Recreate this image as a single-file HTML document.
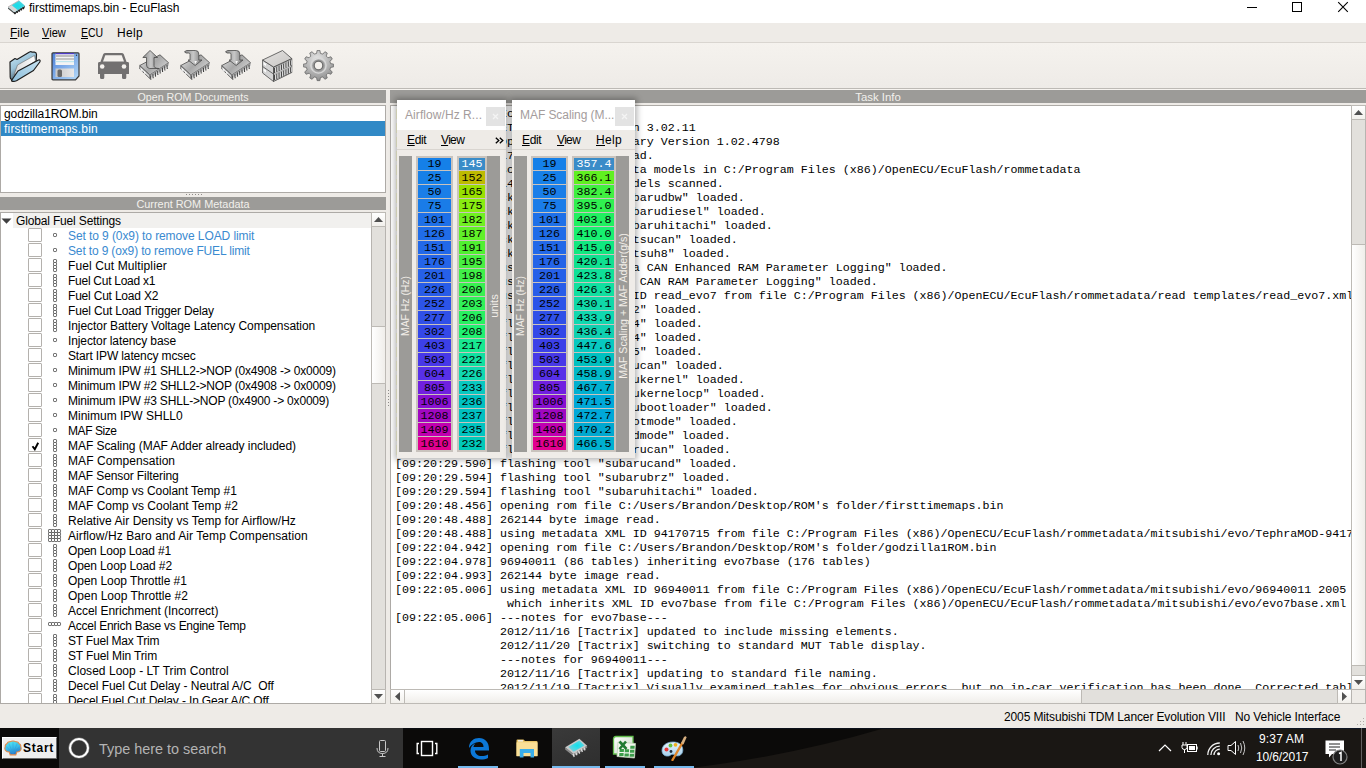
<!DOCTYPE html><html><head><meta charset="utf-8"><title>EcuFlash</title><style>

*{box-sizing:border-box}
html,body{margin:0;padding:0}
body{width:1366px;height:768px;position:relative;overflow:hidden;background:#EEEBE7;font-family:"Liberation Sans",sans-serif;font-size:12px;color:#000}
.a{position:absolute}
.t{position:absolute;white-space:pre;line-height:15px;padding-top:1px}
.hdr{position:absolute;background:#9C9B98;color:#F2F0EC;font-size:10.5px;line-height:13px;padding-top:1px;text-align:center;white-space:pre}
.mono{position:absolute;font-family:"Liberation Mono",monospace;font-size:11.667px;white-space:pre;line-height:14px;padding-top:1px}
.cb{position:absolute;width:14px;height:14px;border:1px solid #B4B1AD;background:#fff}
.u{text-decoration:underline;text-underline-offset:1px}
.sb{position:absolute;background:#E2E0DC}
.btn{position:absolute;background:linear-gradient(#FFFFFF,#F2F0EC);border:1px solid #BDBAB5}

</style></head><body>
<div class="a" style="left:0;top:0;width:1366px;height:23px;background:#fff"></div>
<svg class="a" style="left:4px;top:0px" width="24" height="16" viewBox="0 0 24 16"><defs><radialGradient id="tcg" cx="0.55" cy="0.45" r="0.6"><stop offset="0" stop-color="#10E0EC"/><stop offset="1" stop-color="#6AC8D4"/></radialGradient></defs>
<path d="M4 7 L10.5 12.2 L21 5.8 V7.5 L10.5 14 L4 8.8 Z" fill="#505050"/>
<path d="M9.60 12.30 l1.2 2.2 l1.2 -0.7 l-1.2 -2.2 Z" fill="#1A1A1A"/><path d="M11.70 11.05 l1.2 2.2 l1.2 -0.7 l-1.2 -2.2 Z" fill="#1A1A1A"/><path d="M13.80 9.80 l1.2 2.2 l1.2 -0.7 l-1.2 -2.2 Z" fill="#1A1A1A"/><path d="M15.90 8.55 l1.2 2.2 l1.2 -0.7 l-1.2 -2.2 Z" fill="#1A1A1A"/><path d="M18.00 7.30 l1.2 2.2 l1.2 -0.7 l-1.2 -2.2 Z" fill="#1A1A1A"/>
<path d="M4 7 L15 0.5 L21 5.8 L10.5 12.2 Z" fill="url(#tcg)"/>
<path d="M4 7 L7.5 5 L13.5 10 L10.5 12.2 Z" fill="#D8D8D8"/>
<path d="M4 7 L15 0.5" stroke="#C8B0B0" stroke-width="0.8"/>
</svg>
<div class="t" style="left:29px;top:0px;letter-spacing:-0.037px;">firsttimemaps.bin - EcuFlash</div>
<div class="a" style="left:1247px;top:7px;width:10px;height:1px;background:#000"></div>
<div class="a" style="left:1292px;top:2px;width:10px;height:10px;border:1px solid #000"></div>
<svg class="a" style="left:1337px;top:1px" width="13" height="13" viewBox="0 0 13 13"><path d="M1.2 1.2L10.8 10.8M10.8 1.2L1.2 10.8" stroke="#000" stroke-width="1.1"/></svg>
<div class="a" style="left:0;top:23px;width:1366px;height:19px;background:#EEEBE7"></div>
<div class="a" style="left:0;top:42px;width:1366px;height:1px;background:#D9D5D0"></div>
<div class="t" style="left:10px;top:25px;letter-spacing:0.0px;"><span class="u">F</span>ile</div>
<div class="t" style="left:42px;top:25px;transform:scaleX(0.925);transform-origin:0 0;"><span class="u">V</span>iew</div>
<div class="t" style="left:81px;top:25px;transform:scaleX(0.875);transform-origin:0 0;"><span class="u">E</span>CU</div>
<div class="t" style="left:117px;top:25px;letter-spacing:0.333px;">Help</div>
<div class="a" style="left:0;top:43px;width:1366px;height:45px;background:linear-gradient(#F5F2EE,#EEEBE7)"></div>
<div class="a" style="left:0;top:88px;width:1366px;height:1px;background:#BDBAB5"></div>
<div class="a" style="left:0;top:89px;width:1366px;height:1px;background:#F6F3EF"></div>
<div class="a" style="left:9px;top:50px;line-height:0"><svg width="32" height="32" viewBox="0 0 32 32"><defs>
<linearGradient id="fb" x1="0" y1="0" x2="0.6" y2="1"><stop offset="0" stop-color="#D2ECF8"/><stop offset="0.5" stop-color="#9CC4DA"/><stop offset="1" stop-color="#2E3E48"/></linearGradient>
<linearGradient id="fp" x1="0" y1="0" x2="1" y2="0"><stop offset="0" stop-color="#D8D8D8"/><stop offset="1" stop-color="#FFFFFF"/></linearGradient>
<linearGradient id="ff" x1="0" y1="1" x2="1" y2="0"><stop offset="0" stop-color="#8EC0DC"/><stop offset="1" stop-color="#C6E2F2"/></linearGradient></defs>
<path d="M1 12 L6 8.5 L8 9.5 L20.5 2 Q22 1 23 2.2 L25.5 2.2 Q27.5 2.5 27.5 4.5 L27 14 L5 29 Q1.2 30.5 1.2 27 Z" fill="url(#fb)" stroke="#1E1E1E" stroke-width="1.2" stroke-linejoin="round"/>
<path d="M5 25 L8.5 15 L25.5 5.5 L26.5 11 Z" fill="url(#fp)" stroke="#6A6A6A" stroke-width="0.6"/>
<path d="M2.5 30.5 L9 21 L29.5 10 Q31.8 9.5 30.8 12 L24.5 20.5 L7.5 30.8 Q3 32.2 2.5 30.5 Z" fill="url(#ff)" stroke="#1E1E1E" stroke-width="1.2" stroke-linejoin="round"/>
</svg></div>
<div class="a" style="left:51px;top:52px;line-height:0"><svg width="29" height="29" viewBox="0 0 29 29"><defs>
<linearGradient id="flb" x1="0" y1="0" x2="1" y2="1"><stop offset="0" stop-color="#4A80DC"/><stop offset="1" stop-color="#B8DCF8"/></linearGradient>
<linearGradient id="fls" x1="0" y1="0" x2="1" y2="0"><stop offset="0" stop-color="#C8C8C8"/><stop offset="1" stop-color="#E8E8E8"/></linearGradient></defs>
<path d="M1 1.8 Q1 0.8 2 0.8 H27 Q28 0.8 28 1.8 V24 L24.5 27.8 H2 Q1 27.8 1 26.8 Z" fill="url(#flb)" stroke="#3A3A3A" stroke-width="1.2"/>
<rect x="4.5" y="1.5" width="18.5" height="11.5" fill="#F4F4F4"/>
<rect x="4.5" y="1.2" width="18.5" height="1" fill="#3A20C8"/>
<rect x="4.5" y="3" width="18.5" height="2" fill="#BEBEBE"/>
<rect x="4.5" y="6" width="18.5" height="2" fill="#C4C4C4"/>
<rect x="4.5" y="9" width="18.5" height="1.2" fill="#BFE6EE"/>
<rect x="4.5" y="16.5" width="18.5" height="8.5" fill="url(#fls)"/>
<rect x="6.5" y="17.5" width="4.5" height="7.5" rx="1.5" fill="#6A6A6A"/>
<circle cx="25.5" cy="3.2" r="0.7" fill="#333"/>
</svg></div>
<div class="a" style="left:97px;top:53px;line-height:0"><svg width="33" height="27" viewBox="0 0 33 27">
<path d="M6.2 1.2 Q6.8 0 8.5 0 H24.5 Q26.2 0 26.8 1.2 L29.6 9 H31 Q32 9 32 10.5 V21 H1 V10.5 Q1 9 2 9 H3.4 Z" fill="#727070"/>
<path d="M8.3 2.3 H24.7 L27 8.6 H6 Z" fill="#F4F1ED"/>
<circle cx="5.2" cy="13.5" r="2.3" fill="#F4F1ED"/><circle cx="27" cy="13.5" r="2.3" fill="#F4F1ED"/>
<path d="M3 20 H7.3 V24.5 Q7.3 26 5.8 26 H4.5 Q3 26 3 24.5 Z M25 20 H29.3 V24.5 Q29.3 26 27.8 26 H26.5 Q25 26 25 24.5 Z" fill="#727070"/>
</svg></div>
<div class="a" style="left:139px;top:50px;line-height:0"><svg width="32" height="32" viewBox="0 0 32 32"><defs><linearGradient id="cgup" x1="0" y1="0" x2="1" y2="0.6"><stop offset="0" stop-color="#E6E6E6"/><stop offset="0.55" stop-color="#A8A8A8"/><stop offset="1" stop-color="#D0D0D0"/></linearGradient><linearGradient id="cgupa" x1="0" y1="0" x2="1" y2="0"><stop offset="0" stop-color="#8A8A8A"/><stop offset="0.5" stop-color="#C8C8C8"/><stop offset="1" stop-color="#7A7A7A"/></linearGradient></defs><path d="M0.8 15.5 V19 L10.8 28.5 V25 Z" fill="#D8D8D8" stroke="#4A4A4A" stroke-width="0.8"/><path d="M0.8 15.5 L21 4.8 L29.6 12.8 L10.8 25 Z" fill="url(#cgup)" stroke="#4A4A4A" stroke-width="0.8" stroke-linejoin="round"/><path d="M10.8 25 L29.6 12.8 V15.8 L10.8 28.5 Z" fill="#9A9A9A"/><path d="M11.80 25.50 v4.2" stroke="#3E3E3E" stroke-width="1.1"/><path d="M12.70 25.20 v3.6" stroke="#F0F0F0" stroke-width="0.7"/><path d="M14.15 23.97 v4.2" stroke="#3E3E3E" stroke-width="1.1"/><path d="M15.05 23.67 v3.6" stroke="#F0F0F0" stroke-width="0.7"/><path d="M16.50 22.44 v4.2" stroke="#3E3E3E" stroke-width="1.1"/><path d="M17.40 22.14 v3.6" stroke="#F0F0F0" stroke-width="0.7"/><path d="M18.85 20.91 v4.2" stroke="#3E3E3E" stroke-width="1.1"/><path d="M19.75 20.61 v3.6" stroke="#F0F0F0" stroke-width="0.7"/><path d="M21.20 19.38 v4.2" stroke="#3E3E3E" stroke-width="1.1"/><path d="M22.10 19.08 v3.6" stroke="#F0F0F0" stroke-width="0.7"/><path d="M23.55 17.85 v4.2" stroke="#3E3E3E" stroke-width="1.1"/><path d="M24.45 17.55 v3.6" stroke="#F0F0F0" stroke-width="0.7"/><path d="M25.90 16.32 v4.2" stroke="#3E3E3E" stroke-width="1.1"/><path d="M26.80 16.02 v3.6" stroke="#F0F0F0" stroke-width="0.7"/><path d="M28.25 14.79 v4.2" stroke="#3E3E3E" stroke-width="1.1"/><path d="M29.15 14.49 v3.6" stroke="#F0F0F0" stroke-width="0.7"/><path d="M1.5 18 L3.5 19.5 V22 L1.5 20.5 Z M5 21 L6.5 22 V24.5 L5 23.5 Z" fill="#FFFFFF" opacity="0.8"/><path d="M11 0.5 L18.5 7.5 H15 V15.5 Q15 18.5 20 18.5 H10.5 Q7.5 18 7.5 15 V7.5 H3.8 Z" fill="url(#cgupa)" stroke="#4A4A4A" stroke-width="0.8" stroke-linejoin="round"/></svg></div>
<div class="a" style="left:180px;top:50px;line-height:0"><svg width="32" height="32" viewBox="0 0 32 32"><defs><linearGradient id="cgd1" x1="0" y1="0" x2="1" y2="0.6"><stop offset="0" stop-color="#E6E6E6"/><stop offset="0.55" stop-color="#A8A8A8"/><stop offset="1" stop-color="#D0D0D0"/></linearGradient><linearGradient id="cgd1a" x1="0" y1="0" x2="1" y2="0"><stop offset="0" stop-color="#8A8A8A"/><stop offset="0.5" stop-color="#C8C8C8"/><stop offset="1" stop-color="#7A7A7A"/></linearGradient></defs><path d="M0.8 15.5 V19 L10.8 28.5 V25 Z" fill="#D8D8D8" stroke="#4A4A4A" stroke-width="0.8"/><path d="M0.8 15.5 L21 4.8 L29.6 12.8 L10.8 25 Z" fill="url(#cgd1)" stroke="#4A4A4A" stroke-width="0.8" stroke-linejoin="round"/><path d="M10.8 25 L29.6 12.8 V15.8 L10.8 28.5 Z" fill="#9A9A9A"/><path d="M11.80 25.50 v4.2" stroke="#3E3E3E" stroke-width="1.1"/><path d="M12.70 25.20 v3.6" stroke="#F0F0F0" stroke-width="0.7"/><path d="M14.15 23.97 v4.2" stroke="#3E3E3E" stroke-width="1.1"/><path d="M15.05 23.67 v3.6" stroke="#F0F0F0" stroke-width="0.7"/><path d="M16.50 22.44 v4.2" stroke="#3E3E3E" stroke-width="1.1"/><path d="M17.40 22.14 v3.6" stroke="#F0F0F0" stroke-width="0.7"/><path d="M18.85 20.91 v4.2" stroke="#3E3E3E" stroke-width="1.1"/><path d="M19.75 20.61 v3.6" stroke="#F0F0F0" stroke-width="0.7"/><path d="M21.20 19.38 v4.2" stroke="#3E3E3E" stroke-width="1.1"/><path d="M22.10 19.08 v3.6" stroke="#F0F0F0" stroke-width="0.7"/><path d="M23.55 17.85 v4.2" stroke="#3E3E3E" stroke-width="1.1"/><path d="M24.45 17.55 v3.6" stroke="#F0F0F0" stroke-width="0.7"/><path d="M25.90 16.32 v4.2" stroke="#3E3E3E" stroke-width="1.1"/><path d="M26.80 16.02 v3.6" stroke="#F0F0F0" stroke-width="0.7"/><path d="M28.25 14.79 v4.2" stroke="#3E3E3E" stroke-width="1.1"/><path d="M29.15 14.49 v3.6" stroke="#F0F0F0" stroke-width="0.7"/><path d="M1.5 18 L3.5 19.5 V22 L1.5 20.5 Z M5 21 L6.5 22 V24.5 L5 23.5 Z" fill="#FFFFFF" opacity="0.8"/><path d="M4.5 1.8 L6.5 0.5 H15.5 Q18.8 0.5 18.8 4 V10 H22 L15.2 15.5 L8 10 H10 V4.2 Q10 3 8.5 3 H6 Z" fill="url(#cgd1a)" stroke="#4A4A4A" stroke-width="0.8" stroke-linejoin="round"/><path d="M14.5 11 L15.2 14 L17 11 Z" fill="#FFFFFF" opacity="0.9"/></svg></div>
<div class="a" style="left:221px;top:50px;line-height:0"><svg width="32" height="32" viewBox="0 0 32 32"><defs><linearGradient id="cgd2" x1="0" y1="0" x2="1" y2="0.6"><stop offset="0" stop-color="#E6E6E6"/><stop offset="0.55" stop-color="#A8A8A8"/><stop offset="1" stop-color="#D0D0D0"/></linearGradient><linearGradient id="cgd2a" x1="0" y1="0" x2="1" y2="0"><stop offset="0" stop-color="#8A8A8A"/><stop offset="0.5" stop-color="#C8C8C8"/><stop offset="1" stop-color="#7A7A7A"/></linearGradient></defs><path d="M0.8 15.5 V19 L10.8 28.5 V25 Z" fill="#D8D8D8" stroke="#4A4A4A" stroke-width="0.8"/><path d="M0.8 15.5 L21 4.8 L29.6 12.8 L10.8 25 Z" fill="url(#cgd2)" stroke="#4A4A4A" stroke-width="0.8" stroke-linejoin="round"/><path d="M10.8 25 L29.6 12.8 V15.8 L10.8 28.5 Z" fill="#9A9A9A"/><path d="M11.80 25.50 v4.2" stroke="#3E3E3E" stroke-width="1.1"/><path d="M12.70 25.20 v3.6" stroke="#F0F0F0" stroke-width="0.7"/><path d="M14.15 23.97 v4.2" stroke="#3E3E3E" stroke-width="1.1"/><path d="M15.05 23.67 v3.6" stroke="#F0F0F0" stroke-width="0.7"/><path d="M16.50 22.44 v4.2" stroke="#3E3E3E" stroke-width="1.1"/><path d="M17.40 22.14 v3.6" stroke="#F0F0F0" stroke-width="0.7"/><path d="M18.85 20.91 v4.2" stroke="#3E3E3E" stroke-width="1.1"/><path d="M19.75 20.61 v3.6" stroke="#F0F0F0" stroke-width="0.7"/><path d="M21.20 19.38 v4.2" stroke="#3E3E3E" stroke-width="1.1"/><path d="M22.10 19.08 v3.6" stroke="#F0F0F0" stroke-width="0.7"/><path d="M23.55 17.85 v4.2" stroke="#3E3E3E" stroke-width="1.1"/><path d="M24.45 17.55 v3.6" stroke="#F0F0F0" stroke-width="0.7"/><path d="M25.90 16.32 v4.2" stroke="#3E3E3E" stroke-width="1.1"/><path d="M26.80 16.02 v3.6" stroke="#F0F0F0" stroke-width="0.7"/><path d="M28.25 14.79 v4.2" stroke="#3E3E3E" stroke-width="1.1"/><path d="M29.15 14.49 v3.6" stroke="#F0F0F0" stroke-width="0.7"/><path d="M1.5 18 L3.5 19.5 V22 L1.5 20.5 Z M5 21 L6.5 22 V24.5 L5 23.5 Z" fill="#FFFFFF" opacity="0.8"/><path d="M4.5 1.8 L6.5 0.5 H15.5 Q18.8 0.5 18.8 4 V10 H22 L15.2 15.5 L8 10 H10 V4.2 Q10 3 8.5 3 H6 Z" fill="url(#cgd2a)" stroke="#4A4A4A" stroke-width="0.8" stroke-linejoin="round"/><path d="M14.5 11 L15.2 14 L17 11 Z" fill="#FFFFFF" opacity="0.9"/></svg></div>
<div class="a" style="left:262px;top:50px;line-height:0"><svg width="31" height="32" viewBox="0 0 31 32"><defs><linearGradient id="stg" x1="0" y1="0" x2="1" y2="1"><stop offset="0" stop-color="#E4E2E0"/><stop offset="1" stop-color="#C8C6C4"/></linearGradient></defs><path d="M0.6 10 V23 L11.5 31.5 V17 Z" fill="#D4D4D4" stroke="#4A4A4A" stroke-width="0.8"/><path d="M11.5 17 L29.8 8.5 V22.5 L11.5 31.5 Z" fill="#B8B8B8" stroke="#4A4A4A" stroke-width="0.8"/><path d="M0.6 10 L20.5 0.5 L29.8 8.5 L11.5 17 Z" fill="url(#stg)" stroke="#4A4A4A" stroke-width="0.8" stroke-linejoin="round"/><path d="M12.60 17.80 v5.2" stroke="#3A3A3A" stroke-width="1"/><path d="M13.50 17.80 v4.6" stroke="#F4F4F4" stroke-width="0.7"/><path d="M14.90 16.73 v5.2" stroke="#3A3A3A" stroke-width="1"/><path d="M15.80 16.73 v4.6" stroke="#F4F4F4" stroke-width="0.7"/><path d="M17.20 15.66 v5.2" stroke="#3A3A3A" stroke-width="1"/><path d="M18.10 15.66 v4.6" stroke="#F4F4F4" stroke-width="0.7"/><path d="M19.50 14.59 v5.2" stroke="#3A3A3A" stroke-width="1"/><path d="M20.40 14.59 v4.6" stroke="#F4F4F4" stroke-width="0.7"/><path d="M21.80 13.52 v5.2" stroke="#3A3A3A" stroke-width="1"/><path d="M22.70 13.52 v4.6" stroke="#F4F4F4" stroke-width="0.7"/><path d="M24.10 12.45 v5.2" stroke="#3A3A3A" stroke-width="1"/><path d="M25.00 12.45 v4.6" stroke="#F4F4F4" stroke-width="0.7"/><path d="M26.40 11.38 v5.2" stroke="#3A3A3A" stroke-width="1"/><path d="M27.30 11.38 v4.6" stroke="#F4F4F4" stroke-width="0.7"/><path d="M28.70 10.31 v5.2" stroke="#3A3A3A" stroke-width="1"/><path d="M29.60 10.31 v4.6" stroke="#F4F4F4" stroke-width="0.7"/><path d="M12.60 24.80 v5.2" stroke="#3A3A3A" stroke-width="1"/><path d="M13.50 24.80 v4.6" stroke="#F4F4F4" stroke-width="0.7"/><path d="M14.90 23.73 v5.2" stroke="#3A3A3A" stroke-width="1"/><path d="M15.80 23.73 v4.6" stroke="#F4F4F4" stroke-width="0.7"/><path d="M17.20 22.66 v5.2" stroke="#3A3A3A" stroke-width="1"/><path d="M18.10 22.66 v4.6" stroke="#F4F4F4" stroke-width="0.7"/><path d="M19.50 21.59 v5.2" stroke="#3A3A3A" stroke-width="1"/><path d="M20.40 21.59 v4.6" stroke="#F4F4F4" stroke-width="0.7"/><path d="M21.80 20.52 v5.2" stroke="#3A3A3A" stroke-width="1"/><path d="M22.70 20.52 v4.6" stroke="#F4F4F4" stroke-width="0.7"/><path d="M24.10 19.45 v5.2" stroke="#3A3A3A" stroke-width="1"/><path d="M25.00 19.45 v4.6" stroke="#F4F4F4" stroke-width="0.7"/><path d="M26.40 18.38 v5.2" stroke="#3A3A3A" stroke-width="1"/><path d="M27.30 18.38 v4.6" stroke="#F4F4F4" stroke-width="0.7"/><path d="M28.70 17.31 v5.2" stroke="#3A3A3A" stroke-width="1"/><path d="M29.60 17.31 v4.6" stroke="#F4F4F4" stroke-width="0.7"/><path d="M0.6 16.5 L11.5 24" stroke="#4A4A4A" stroke-width="0.8"/><path d="M1.5 12 L4 13.8 V16 L1.5 14.5 Z M1.5 18.5 L4 20.3 V22.5 L1.5 21 Z" fill="#FFF" opacity="0.9"/></svg></div>
<div class="a" style="left:303px;top:50px;line-height:0"><svg width="31" height="32" viewBox="0 0 31 32"><defs><radialGradient id="gg" cx="0.45" cy="0.3" r="0.75"><stop offset="0" stop-color="#E8E8E8"/><stop offset="1" stop-color="#8A8A8A"/></radialGradient></defs><path d="M13.56 3.46 L14.13 0.36 L16.87 0.36 L17.44 3.46 L19.84 4.10 L21.89 1.71 L24.25 3.07 L23.21 6.04 L24.96 7.79 L27.93 6.75 L29.29 9.11 L26.90 11.16 L27.54 13.56 L30.64 14.13 L30.64 16.87 L27.54 17.44 L26.90 19.84 L29.29 21.89 L27.93 24.25 L24.96 23.21 L23.21 24.96 L24.25 27.93 L21.89 29.29 L19.84 26.90 L17.44 27.54 L16.87 30.64 L14.13 30.64 L13.56 27.54 L11.16 26.90 L9.11 29.29 L6.75 27.93 L7.79 24.96 L6.04 23.21 L3.07 24.25 L1.71 21.89 L4.10 19.84 L3.46 17.44 L0.36 16.87 L0.36 14.13 L3.46 13.56 L4.10 11.16 L1.71 9.11 L3.07 6.75 L6.04 7.79 L7.79 6.04 L6.75 3.07 L9.11 1.71 L11.16 4.10 Z" fill="url(#gg)" stroke="#6A6A6A" stroke-width="0.8" stroke-linejoin="round"/><circle cx="15.5" cy="15.5" r="7.6" fill="none" stroke="#D8D8D8" stroke-width="1.4"/><circle cx="15.5" cy="15.5" r="6.3" fill="#9C9C9C"/><circle cx="15.5" cy="15.5" r="4.3" fill="#F4F1ED" stroke="#6E6E6E" stroke-width="1.2"/></svg></div>
<div class="hdr" style="left:0;top:90px;width:386px;height:13px;font-size:10.7px">Open ROM Documents</div>
<div class="a" style="left:0;top:105px;width:386px;height:88px;background:#fff;border:1px solid #ADAAA6"></div>
<div class="t" style="left:4px;top:106px;letter-spacing:-0.067px;">godzilla1ROM.bin</div>
<div class="a" style="left:1px;top:121px;width:384px;height:15px;background:#3189C6"></div>
<div class="t" style="left:4px;top:121px;color:#fff;letter-spacing:0.188px;">firsttimemaps.bin</div>
<div class="a" style="left:186px;top:194px;width:16px;height:1px;background:repeating-linear-gradient(90deg,#8E8C8A 0 1px,transparent 1px 3px)"></div>
<div class="a" style="left:388px;top:390px;width:1px;height:17px;background:repeating-linear-gradient(180deg,#8E8C8A 0 1px,transparent 1px 3px)"></div>
<div class="hdr" style="left:0;top:197px;width:386px;height:13px;font-size:10.9px">Current ROM Metadata</div>
<div class="a" style="left:0;top:212px;width:386px;height:492px;background:#fff;border:1px solid #ADAAA6"></div>
<div class="a" style="left:1px;top:213px;width:370px;height:490px;overflow:hidden">
<div class="a" style="left:12px;top:0px;width:358px;height:15px;background:#F1F0EE"></div>
<svg class="a" style="left:0px;top:5px" width="11" height="6"><path d="M0.5 0.5H10.5L5.5 5.8Z" fill="#404040"/></svg>
<div class="t" style="left:15px;top:0px;letter-spacing:-0.158px">Global Fuel Settings</div>
<div class="cb" style="left:27px;top:15px;width:14px;height:14px;border-radius:1px"></div>
<div class="a" style="left:52px;top:20px;line-height:0"><svg width="5" height="5"><rect x="0.5" y="0.5" width="3" height="3" rx="0.8" fill="#fff" stroke="#555"/></svg></div>
<div class="t" style="left:67px;top:15px;color:#3A8AD0;letter-spacing:-0.088px">Set to 9 (0x9) to remove LOAD limit</div>
<div class="cb" style="left:27px;top:30px;width:14px;height:14px;border-radius:1px"></div>
<div class="a" style="left:52px;top:35px;line-height:0"><svg width="5" height="5"><rect x="0.5" y="0.5" width="3" height="3" rx="0.8" fill="#fff" stroke="#555"/></svg></div>
<div class="t" style="left:67px;top:30px;color:#3A8AD0;letter-spacing:-0.147px">Set to 9 (ox9) to remove FUEL limit</div>
<div class="cb" style="left:27px;top:45px;width:14px;height:14px;border-radius:1px"></div>
<div class="a" style="left:52px;top:46px;line-height:0"><svg width="5" height="14"><rect x="0.5" y="0.5" width="3" height="3" rx="0.8" fill="#fff" stroke="#555"/><rect x="0.5" y="3.5" width="3" height="3" rx="0.8" fill="#fff" stroke="#555"/><rect x="0.5" y="6.5" width="3" height="3" rx="0.8" fill="#fff" stroke="#555"/><rect x="0.5" y="9.5" width="3" height="3" rx="0.8" fill="#fff" stroke="#555"/></svg></div>
<div class="t" style="left:67px;top:45px;color:#000;letter-spacing:0.111px">Fuel Cut Multiplier</div>
<div class="cb" style="left:27px;top:60px;width:14px;height:14px;border-radius:1px"></div>
<div class="a" style="left:52px;top:61px;line-height:0"><svg width="5" height="14"><rect x="0.5" y="0.5" width="3" height="3" rx="0.8" fill="#fff" stroke="#555"/><rect x="0.5" y="3.5" width="3" height="3" rx="0.8" fill="#fff" stroke="#555"/><rect x="0.5" y="6.5" width="3" height="3" rx="0.8" fill="#fff" stroke="#555"/><rect x="0.5" y="9.5" width="3" height="3" rx="0.8" fill="#fff" stroke="#555"/></svg></div>
<div class="t" style="left:67px;top:60px;color:#000;letter-spacing:-0.267px">Fuel Cut Load x1</div>
<div class="cb" style="left:27px;top:75px;width:14px;height:14px;border-radius:1px"></div>
<div class="a" style="left:52px;top:76px;line-height:0"><svg width="5" height="14"><rect x="0.5" y="0.5" width="3" height="3" rx="0.8" fill="#fff" stroke="#555"/><rect x="0.5" y="3.5" width="3" height="3" rx="0.8" fill="#fff" stroke="#555"/><rect x="0.5" y="6.5" width="3" height="3" rx="0.8" fill="#fff" stroke="#555"/><rect x="0.5" y="9.5" width="3" height="3" rx="0.8" fill="#fff" stroke="#555"/></svg></div>
<div class="t" style="left:67px;top:75px;color:#000;letter-spacing:-0.2px">Fuel Cut Load X2</div>
<div class="cb" style="left:27px;top:90px;width:14px;height:14px;border-radius:1px"></div>
<div class="a" style="left:52px;top:91px;line-height:0"><svg width="5" height="14"><rect x="0.5" y="0.5" width="3" height="3" rx="0.8" fill="#fff" stroke="#555"/><rect x="0.5" y="3.5" width="3" height="3" rx="0.8" fill="#fff" stroke="#555"/><rect x="0.5" y="6.5" width="3" height="3" rx="0.8" fill="#fff" stroke="#555"/><rect x="0.5" y="9.5" width="3" height="3" rx="0.8" fill="#fff" stroke="#555"/></svg></div>
<div class="t" style="left:67px;top:90px;color:#000;letter-spacing:-0.154px">Fuel Cut Load Trigger Delay</div>
<div class="cb" style="left:27px;top:105px;width:14px;height:14px;border-radius:1px"></div>
<div class="a" style="left:52px;top:106px;line-height:0"><svg width="5" height="14"><rect x="0.5" y="0.5" width="3" height="3" rx="0.8" fill="#fff" stroke="#555"/><rect x="0.5" y="3.5" width="3" height="3" rx="0.8" fill="#fff" stroke="#555"/><rect x="0.5" y="6.5" width="3" height="3" rx="0.8" fill="#fff" stroke="#555"/><rect x="0.5" y="9.5" width="3" height="3" rx="0.8" fill="#fff" stroke="#555"/></svg></div>
<div class="t" style="left:67px;top:105px;color:#000;letter-spacing:-0.068px">Injector Battery Voltage Latency Compensation</div>
<div class="cb" style="left:27px;top:120px;width:14px;height:14px;border-radius:1px"></div>
<div class="a" style="left:52px;top:125px;line-height:0"><svg width="5" height="5"><rect x="0.5" y="0.5" width="3" height="3" rx="0.8" fill="#fff" stroke="#555"/></svg></div>
<div class="t" style="left:67px;top:120px;color:#000;letter-spacing:-0.1px">Injector latency base</div>
<div class="cb" style="left:27px;top:135px;width:14px;height:14px;border-radius:1px"></div>
<div class="a" style="left:52px;top:140px;line-height:0"><svg width="5" height="5"><rect x="0.5" y="0.5" width="3" height="3" rx="0.8" fill="#fff" stroke="#555"/></svg></div>
<div class="t" style="left:67px;top:135px;color:#000;letter-spacing:-0.136px">Start IPW latency mcsec</div>
<div class="cb" style="left:27px;top:150px;width:14px;height:14px;border-radius:1px"></div>
<div class="a" style="left:52px;top:155px;line-height:0"><svg width="5" height="5"><rect x="0.5" y="0.5" width="3" height="3" rx="0.8" fill="#fff" stroke="#555"/></svg></div>
<div class="t" style="left:67px;top:150px;color:#000;letter-spacing:-0.184px">Minimum IPW #1 SHLL2-&gt;NOP (0x4908 -&gt; 0x0009)</div>
<div class="cb" style="left:27px;top:165px;width:14px;height:14px;border-radius:1px"></div>
<div class="a" style="left:52px;top:170px;line-height:0"><svg width="5" height="5"><rect x="0.5" y="0.5" width="3" height="3" rx="0.8" fill="#fff" stroke="#555"/></svg></div>
<div class="t" style="left:67px;top:165px;color:#000;letter-spacing:-0.184px">Minimum IPW #2 SHLL2-&gt;NOP (0x4908 -&gt; 0x0009)</div>
<div class="cb" style="left:27px;top:180px;width:14px;height:14px;border-radius:1px"></div>
<div class="a" style="left:52px;top:185px;line-height:0"><svg width="5" height="5"><rect x="0.5" y="0.5" width="3" height="3" rx="0.8" fill="#fff" stroke="#555"/></svg></div>
<div class="t" style="left:67px;top:180px;color:#000;letter-spacing:-0.188px">Minimum IPW #3 SHLL-&gt;NOP (0x4900 -&gt; 0x0009)</div>
<div class="cb" style="left:27px;top:195px;width:14px;height:14px;border-radius:1px"></div>
<div class="a" style="left:52px;top:200px;line-height:0"><svg width="5" height="5"><rect x="0.5" y="0.5" width="3" height="3" rx="0.8" fill="#fff" stroke="#555"/></svg></div>
<div class="t" style="left:67px;top:195px;color:#000;letter-spacing:0.0px">Minimum IPW SHLL0</div>
<div class="cb" style="left:27px;top:210px;width:14px;height:14px;border-radius:1px"></div>
<div class="a" style="left:52px;top:215px;line-height:0"><svg width="5" height="5"><rect x="0.5" y="0.5" width="3" height="3" rx="0.8" fill="#fff" stroke="#555"/></svg></div>
<div class="t" style="left:67px;top:210px;color:#000;letter-spacing:-0.429px">MAF Size</div>
<div class="cb" style="left:27px;top:225px;width:14px;height:14px;border-radius:1px"></div>
<svg class="a" style="left:29px;top:228px" width="10" height="10"><path d="M2.5 5.2 L4.8 8.3 L8.2 1.8" fill="none" stroke="#000" stroke-width="1.9"/></svg>
<div class="a" style="left:52px;top:226px;line-height:0"><svg width="5" height="14"><rect x="0.5" y="0.5" width="3" height="3" rx="0.8" fill="#fff" stroke="#555"/><rect x="0.5" y="3.5" width="3" height="3" rx="0.8" fill="#fff" stroke="#555"/><rect x="0.5" y="6.5" width="3" height="3" rx="0.8" fill="#fff" stroke="#555"/><rect x="0.5" y="9.5" width="3" height="3" rx="0.8" fill="#fff" stroke="#555"/></svg></div>
<div class="t" style="left:67px;top:225px;color:#000;letter-spacing:-0.051px">MAF Scaling (MAF Adder already included)</div>
<div class="cb" style="left:27px;top:240px;width:14px;height:14px;border-radius:1px"></div>
<div class="a" style="left:52px;top:241px;line-height:0"><svg width="5" height="14"><rect x="0.5" y="0.5" width="3" height="3" rx="0.8" fill="#fff" stroke="#555"/><rect x="0.5" y="3.5" width="3" height="3" rx="0.8" fill="#fff" stroke="#555"/><rect x="0.5" y="6.5" width="3" height="3" rx="0.8" fill="#fff" stroke="#555"/><rect x="0.5" y="9.5" width="3" height="3" rx="0.8" fill="#fff" stroke="#555"/></svg></div>
<div class="t" style="left:67px;top:240px;color:#000;letter-spacing:0.067px">MAF Compensation</div>
<div class="cb" style="left:27px;top:255px;width:14px;height:14px;border-radius:1px"></div>
<div class="a" style="left:52px;top:256px;line-height:0"><svg width="5" height="14"><rect x="0.5" y="0.5" width="3" height="3" rx="0.8" fill="#fff" stroke="#555"/><rect x="0.5" y="3.5" width="3" height="3" rx="0.8" fill="#fff" stroke="#555"/><rect x="0.5" y="6.5" width="3" height="3" rx="0.8" fill="#fff" stroke="#555"/><rect x="0.5" y="9.5" width="3" height="3" rx="0.8" fill="#fff" stroke="#555"/></svg></div>
<div class="t" style="left:67px;top:255px;color:#000;letter-spacing:-0.105px">MAF Sensor Filtering</div>
<div class="cb" style="left:27px;top:270px;width:14px;height:14px;border-radius:1px"></div>
<div class="a" style="left:52px;top:271px;line-height:0"><svg width="5" height="14"><rect x="0.5" y="0.5" width="3" height="3" rx="0.8" fill="#fff" stroke="#555"/><rect x="0.5" y="3.5" width="3" height="3" rx="0.8" fill="#fff" stroke="#555"/><rect x="0.5" y="6.5" width="3" height="3" rx="0.8" fill="#fff" stroke="#555"/><rect x="0.5" y="9.5" width="3" height="3" rx="0.8" fill="#fff" stroke="#555"/></svg></div>
<div class="t" style="left:67px;top:270px;color:#000;letter-spacing:-0.038px">MAF Comp vs Coolant Temp #1</div>
<div class="cb" style="left:27px;top:285px;width:14px;height:14px;border-radius:1px"></div>
<div class="a" style="left:52px;top:286px;line-height:0"><svg width="5" height="14"><rect x="0.5" y="0.5" width="3" height="3" rx="0.8" fill="#fff" stroke="#555"/><rect x="0.5" y="3.5" width="3" height="3" rx="0.8" fill="#fff" stroke="#555"/><rect x="0.5" y="6.5" width="3" height="3" rx="0.8" fill="#fff" stroke="#555"/><rect x="0.5" y="9.5" width="3" height="3" rx="0.8" fill="#fff" stroke="#555"/></svg></div>
<div class="t" style="left:67px;top:285px;color:#000;letter-spacing:0.0px">MAF Comp vs Coolant Temp #2</div>
<div class="cb" style="left:27px;top:300px;width:14px;height:14px;border-radius:1px"></div>
<div class="a" style="left:52px;top:301px;line-height:0"><svg width="5" height="14"><rect x="0.5" y="0.5" width="3" height="3" rx="0.8" fill="#fff" stroke="#555"/><rect x="0.5" y="3.5" width="3" height="3" rx="0.8" fill="#fff" stroke="#555"/><rect x="0.5" y="6.5" width="3" height="3" rx="0.8" fill="#fff" stroke="#555"/><rect x="0.5" y="9.5" width="3" height="3" rx="0.8" fill="#fff" stroke="#555"/></svg></div>
<div class="t" style="left:67px;top:300px;color:#000;letter-spacing:0.048px">Relative Air Density vs Temp for Airflow/Hz</div>
<div class="cb" style="left:27px;top:315px;width:14px;height:14px;border-radius:1px"></div>
<div class="a" style="left:47px;top:316px;line-height:0"><svg width="14" height="14"><rect x="0.5" y="0.5" width="3" height="3" rx="0.8" fill="#fff" stroke="#555"/><rect x="3.5" y="0.5" width="3" height="3" rx="0.8" fill="#fff" stroke="#555"/><rect x="6.5" y="0.5" width="3" height="3" rx="0.8" fill="#fff" stroke="#555"/><rect x="9.5" y="0.5" width="3" height="3" rx="0.8" fill="#fff" stroke="#555"/><rect x="0.5" y="3.5" width="3" height="3" rx="0.8" fill="#fff" stroke="#555"/><rect x="3.5" y="3.5" width="3" height="3" rx="0.8" fill="#fff" stroke="#555"/><rect x="6.5" y="3.5" width="3" height="3" rx="0.8" fill="#fff" stroke="#555"/><rect x="9.5" y="3.5" width="3" height="3" rx="0.8" fill="#fff" stroke="#555"/><rect x="0.5" y="6.5" width="3" height="3" rx="0.8" fill="#fff" stroke="#555"/><rect x="3.5" y="6.5" width="3" height="3" rx="0.8" fill="#fff" stroke="#555"/><rect x="6.5" y="6.5" width="3" height="3" rx="0.8" fill="#fff" stroke="#555"/><rect x="9.5" y="6.5" width="3" height="3" rx="0.8" fill="#fff" stroke="#555"/><rect x="0.5" y="9.5" width="3" height="3" rx="0.8" fill="#fff" stroke="#555"/><rect x="3.5" y="9.5" width="3" height="3" rx="0.8" fill="#fff" stroke="#555"/><rect x="6.5" y="9.5" width="3" height="3" rx="0.8" fill="#fff" stroke="#555"/><rect x="9.5" y="9.5" width="3" height="3" rx="0.8" fill="#fff" stroke="#555"/></svg></div>
<div class="t" style="left:67px;top:315px;color:#000;letter-spacing:0.075px">Airflow/Hz Baro and Air Temp Compensation</div>
<div class="cb" style="left:27px;top:330px;width:14px;height:14px;border-radius:1px"></div>
<div class="a" style="left:52px;top:331px;line-height:0"><svg width="5" height="14"><rect x="0.5" y="0.5" width="3" height="3" rx="0.8" fill="#fff" stroke="#555"/><rect x="0.5" y="3.5" width="3" height="3" rx="0.8" fill="#fff" stroke="#555"/><rect x="0.5" y="6.5" width="3" height="3" rx="0.8" fill="#fff" stroke="#555"/><rect x="0.5" y="9.5" width="3" height="3" rx="0.8" fill="#fff" stroke="#555"/></svg></div>
<div class="t" style="left:67px;top:330px;color:#000;letter-spacing:-0.188px">Open Loop Load #1</div>
<div class="cb" style="left:27px;top:345px;width:14px;height:14px;border-radius:1px"></div>
<div class="a" style="left:52px;top:346px;line-height:0"><svg width="5" height="14"><rect x="0.5" y="0.5" width="3" height="3" rx="0.8" fill="#fff" stroke="#555"/><rect x="0.5" y="3.5" width="3" height="3" rx="0.8" fill="#fff" stroke="#555"/><rect x="0.5" y="6.5" width="3" height="3" rx="0.8" fill="#fff" stroke="#555"/><rect x="0.5" y="9.5" width="3" height="3" rx="0.8" fill="#fff" stroke="#555"/></svg></div>
<div class="t" style="left:67px;top:345px;color:#000;letter-spacing:-0.125px">Open Loop Load #2</div>
<div class="cb" style="left:27px;top:360px;width:14px;height:14px;border-radius:1px"></div>
<div class="a" style="left:52px;top:361px;line-height:0"><svg width="5" height="14"><rect x="0.5" y="0.5" width="3" height="3" rx="0.8" fill="#fff" stroke="#555"/><rect x="0.5" y="3.5" width="3" height="3" rx="0.8" fill="#fff" stroke="#555"/><rect x="0.5" y="6.5" width="3" height="3" rx="0.8" fill="#fff" stroke="#555"/><rect x="0.5" y="9.5" width="3" height="3" rx="0.8" fill="#fff" stroke="#555"/></svg></div>
<div class="t" style="left:67px;top:360px;color:#000;letter-spacing:-0.05px">Open Loop Throttle #1</div>
<div class="cb" style="left:27px;top:375px;width:14px;height:14px;border-radius:1px"></div>
<div class="a" style="left:52px;top:376px;line-height:0"><svg width="5" height="14"><rect x="0.5" y="0.5" width="3" height="3" rx="0.8" fill="#fff" stroke="#555"/><rect x="0.5" y="3.5" width="3" height="3" rx="0.8" fill="#fff" stroke="#555"/><rect x="0.5" y="6.5" width="3" height="3" rx="0.8" fill="#fff" stroke="#555"/><rect x="0.5" y="9.5" width="3" height="3" rx="0.8" fill="#fff" stroke="#555"/></svg></div>
<div class="t" style="left:67px;top:375px;color:#000;letter-spacing:0.0px">Open Loop Throttle #2</div>
<div class="cb" style="left:27px;top:390px;width:14px;height:14px;border-radius:1px"></div>
<div class="a" style="left:52px;top:391px;line-height:0"><svg width="5" height="14"><rect x="0.5" y="0.5" width="3" height="3" rx="0.8" fill="#fff" stroke="#555"/><rect x="0.5" y="3.5" width="3" height="3" rx="0.8" fill="#fff" stroke="#555"/><rect x="0.5" y="6.5" width="3" height="3" rx="0.8" fill="#fff" stroke="#555"/><rect x="0.5" y="9.5" width="3" height="3" rx="0.8" fill="#fff" stroke="#555"/></svg></div>
<div class="t" style="left:67px;top:390px;color:#000;letter-spacing:-0.037px">Accel Enrichment (Incorrect)</div>
<div class="cb" style="left:27px;top:405px;width:14px;height:14px;border-radius:1px"></div>
<div class="a" style="left:47px;top:409px;line-height:0"><svg width="14" height="5"><rect x="0.5" y="0.5" width="3" height="3" rx="0.8" fill="#fff" stroke="#555"/><rect x="3.5" y="0.5" width="3" height="3" rx="0.8" fill="#fff" stroke="#555"/><rect x="6.5" y="0.5" width="3" height="3" rx="0.8" fill="#fff" stroke="#555"/><rect x="9.5" y="0.5" width="3" height="3" rx="0.8" fill="#fff" stroke="#555"/></svg></div>
<div class="t" style="left:67px;top:405px;color:#000;letter-spacing:-0.258px">Accel Enrich Base vs Engine Temp</div>
<div class="cb" style="left:27px;top:420px;width:14px;height:14px;border-radius:1px"></div>
<div class="a" style="left:52px;top:421px;line-height:0"><svg width="5" height="14"><rect x="0.5" y="0.5" width="3" height="3" rx="0.8" fill="#fff" stroke="#555"/><rect x="0.5" y="3.5" width="3" height="3" rx="0.8" fill="#fff" stroke="#555"/><rect x="0.5" y="6.5" width="3" height="3" rx="0.8" fill="#fff" stroke="#555"/><rect x="0.5" y="9.5" width="3" height="3" rx="0.8" fill="#fff" stroke="#555"/></svg></div>
<div class="t" style="left:67px;top:420px;color:#000;letter-spacing:-0.2px">ST Fuel Max Trim</div>
<div class="cb" style="left:27px;top:435px;width:14px;height:14px;border-radius:1px"></div>
<div class="a" style="left:52px;top:436px;line-height:0"><svg width="5" height="14"><rect x="0.5" y="0.5" width="3" height="3" rx="0.8" fill="#fff" stroke="#555"/><rect x="0.5" y="3.5" width="3" height="3" rx="0.8" fill="#fff" stroke="#555"/><rect x="0.5" y="6.5" width="3" height="3" rx="0.8" fill="#fff" stroke="#555"/><rect x="0.5" y="9.5" width="3" height="3" rx="0.8" fill="#fff" stroke="#555"/></svg></div>
<div class="t" style="left:67px;top:435px;color:#000;letter-spacing:-0.133px">ST Fuel Min Trim</div>
<div class="cb" style="left:27px;top:450px;width:14px;height:14px;border-radius:1px"></div>
<div class="a" style="left:52px;top:451px;line-height:0"><svg width="5" height="14"><rect x="0.5" y="0.5" width="3" height="3" rx="0.8" fill="#fff" stroke="#555"/><rect x="0.5" y="3.5" width="3" height="3" rx="0.8" fill="#fff" stroke="#555"/><rect x="0.5" y="6.5" width="3" height="3" rx="0.8" fill="#fff" stroke="#555"/><rect x="0.5" y="9.5" width="3" height="3" rx="0.8" fill="#fff" stroke="#555"/></svg></div>
<div class="t" style="left:67px;top:450px;color:#000;letter-spacing:0.036px">Closed Loop - LT Trim Control</div>
<div class="cb" style="left:27px;top:465px;width:14px;height:14px;border-radius:1px"></div>
<div class="a" style="left:52px;top:466px;line-height:0"><svg width="5" height="14"><rect x="0.5" y="0.5" width="3" height="3" rx="0.8" fill="#fff" stroke="#555"/><rect x="0.5" y="3.5" width="3" height="3" rx="0.8" fill="#fff" stroke="#555"/><rect x="0.5" y="6.5" width="3" height="3" rx="0.8" fill="#fff" stroke="#555"/><rect x="0.5" y="9.5" width="3" height="3" rx="0.8" fill="#fff" stroke="#555"/></svg></div>
<div class="t" style="left:67px;top:465px;color:#000;letter-spacing:-0.053px">Decel Fuel Cut Delay - Neutral A/C  Off</div>
<div class="cb" style="left:27px;top:480px;width:14px;height:14px;border-radius:1px"></div>
<div class="a" style="left:52px;top:481px;line-height:0"><svg width="5" height="14"><rect x="0.5" y="0.5" width="3" height="3" rx="0.8" fill="#fff" stroke="#555"/><rect x="0.5" y="3.5" width="3" height="3" rx="0.8" fill="#fff" stroke="#555"/><rect x="0.5" y="6.5" width="3" height="3" rx="0.8" fill="#fff" stroke="#555"/><rect x="0.5" y="9.5" width="3" height="3" rx="0.8" fill="#fff" stroke="#555"/></svg></div>
<div class="t" style="left:67px;top:480px;color:#000;letter-spacing:-0.135px">Decel Fuel Cut Delay - In Gear A/C Off</div>
</div>
<div class="sb" style="left:371px;top:212px;width:15px;height:492px;border:1px solid #B7B4B0"></div>
<div class="btn" style="left:371px;top:212px;width:15px;height:15px"></div>
<svg class="a" style="left:374px;top:217px" width="9" height="5"><path d="M0 5H9L4.5 0Z" fill="#505050"/></svg>
<div class="btn" style="left:371px;top:326px;width:15px;height:58px;background:linear-gradient(90deg,#FFFFFF,#F0EEEA)"></div>
<div class="btn" style="left:371px;top:689px;width:15px;height:15px"></div>
<svg class="a" style="left:374px;top:694px" width="9" height="5"><path d="M0 0H9L4.5 5Z" fill="#505050"/></svg>
<div class="hdr" style="left:390px;top:90px;width:976px;height:13px;font-size:11.4px">Task Info</div>
<div class="a" style="left:390px;top:105px;width:976px;height:599px;background:#fff;border:1px solid #ADAAA6;border-right:none"></div>
<div class="a" style="left:391px;top:106px;width:960px;height:583px;overflow:hidden">
<div class="mono" style="left:4px;top:0px">[09:20:28.601] Ecu initialized</div>
<div class="mono" style="left:4px;top:14px">[09:20:28.601] ETK EcuFlash Version 3.02.11</div>
<div class="mono" style="left:4px;top:28px">[09:20:28.632] OpenPort 2.0 libr  ary Version 1.02.4798</div>
<div class="mono" style="left:4px;top:42px">[09:20:28.632] 17 templates lo    ad.</div>
<div class="mono" style="left:4px;top:56px">[09:20:28.632] scanning for metadata models in C:/Program Files (x86)/OpenECU/EcuFlash/rommetadata</div>
<div class="mono" style="left:4px;top:70px">[09:20:29.393] 1474 metadata mo   dels scanned.</div>
<div class="mono" style="left:4px;top:84px">[09:20:29.401] ckecksum module "subarudbw" loaded.</div>
<div class="mono" style="left:4px;top:98px">[09:20:29.401] ckecksum module "subarudiesel" loaded.</div>
<div class="mono" style="left:4px;top:112px">[09:20:29.401] ckecksum module "subaruhitachi" loaded.</div>
<div class="mono" style="left:4px;top:126px">[09:20:29.401] ckecksum module "mitsucan" loaded.</div>
<div class="mono" style="left:4px;top:140px">[09:20:29.401] ckecksum module "mitsuh8" loaded.</div>
<div class="mono" style="left:4px;top:154px">[09:20:29.412] using model "Mitsuba CAN Enhanced RAM Parameter Logging" loaded.</div>
<div class="mono" style="left:4px;top:168px">[09:20:29.415] using model "Subaru CAN RAM Parameter Logging" loaded.</div>
<div class="mono" style="left:4px;top:182px">[09:20:29.418] using metadata XML ID read_evo7 from file C:/Program Files (x86)/OpenECU/EcuFlash/rommetadata/read templates/read_evo7.xml</div>
<div class="mono" style="left:4px;top:196px">[09:20:29.580] flashing tool "wrx02" loaded.</div>
<div class="mono" style="left:4px;top:210px">[09:20:29.580] flashing tool "wrx04" loaded.</div>
<div class="mono" style="left:4px;top:224px">[09:20:29.580] flashing tool "sti04" loaded.</div>
<div class="mono" style="left:4px;top:238px">[09:20:29.580] flashing tool "sti05" loaded.</div>
<div class="mono" style="left:4px;top:252px">[09:20:29.580] flashing tool "mitsucan" loaded.</div>
<div class="mono" style="left:4px;top:266px">[09:20:29.580] flashing tool "mitsukernel" loaded.</div>
<div class="mono" style="left:4px;top:280px">[09:20:29.580] flashing tool "mitsukernelocp" loaded.</div>
<div class="mono" style="left:4px;top:294px">[09:20:29.580] flashing tool "mitsubootloader" loaded.</div>
<div class="mono" style="left:4px;top:308px">[09:20:29.580] flashing tool "shbootmode" loaded.</div>
<div class="mono" style="left:4px;top:322px">[09:20:29.580] flashing tool "shaudmode" loaded.</div>
<div class="mono" style="left:4px;top:336px">[09:20:29.580] flashing tool "subarucan" loaded.</div>
<div class="mono" style="left:4px;top:350px">[09:20:29.590] flashing tool "subarucand" loaded.</div>
<div class="mono" style="left:4px;top:364px">[09:20:29.594] flashing tool "subarubrz" loaded.</div>
<div class="mono" style="left:4px;top:378px">[09:20:29.594] flashing tool "subaruhitachi" loaded.</div>
<div class="mono" style="left:4px;top:392px">[09:20:48.456] opening rom file C:/Users/Brandon/Desktop/ROM's folder/firsttimemaps.bin</div>
<div class="mono" style="left:4px;top:406px">[09:20:48.488] 262144 byte image read.</div>
<div class="mono" style="left:4px;top:420px">[09:20:48.488] using metadata XML ID 94170715 from file C:/Program Files (x86)/OpenECU/EcuFlash/rommetadata/mitsubishi/evo/TephraMOD-94170715.xml</div>
<div class="mono" style="left:4px;top:434px">[09:22:04.942] opening rom file C:/Users/Brandon/Desktop/ROM's folder/godzilla1ROM.bin</div>
<div class="mono" style="left:4px;top:448px">[09:22:04.978] 96940011 (86 tables) inheriting evo7base (176 tables)</div>
<div class="mono" style="left:4px;top:462px">[09:22:04.993] 262144 byte image read.</div>
<div class="mono" style="left:4px;top:476px">[09:22:05.006] using metadata XML ID 96940011 from file C:/Program Files (x86)/OpenECU/EcuFlash/rommetadata/mitsubishi/evo/96940011 2005 USDM Lancer Evolution VIII MR 5MT.xml</div>
<div class="mono" style="left:4px;top:490px">                which inherits XML ID evo7base from file C:/Program Files (x86)/OpenECU/EcuFlash/rommetadata/mitsubishi/evo/evo7base.xml</div>
<div class="mono" style="left:4px;top:504px">[09:22:05.006] ---notes for evo7base---</div>
<div class="mono" style="left:4px;top:518px">               2012/11/16 [Tactrix] updated to include missing elements.</div>
<div class="mono" style="left:4px;top:532px">               2012/11/20 [Tactrix] switching to standard MUT Table display.</div>
<div class="mono" style="left:4px;top:546px">               ---notes for 96940011---</div>
<div class="mono" style="left:4px;top:560px">               2012/11/16 [Tactrix] updating to standard file naming.</div>
<div class="mono" style="left:4px;top:574px">               2012/11/19 [Tactrix] Visually examined tables for obvious errors, but no in-car verification has been done. Corrected table scaling.</div>
</div>
<div class="sb" style="left:1351px;top:105px;width:15px;height:585px;border:1px solid #B7B4B0"></div>
<div class="btn" style="left:1351px;top:105px;width:15px;height:15px"></div>
<svg class="a" style="left:1354px;top:110px" width="9" height="5"><path d="M0 5H9L4.5 0Z" fill="#505050"/></svg>
<div class="btn" style="left:1351px;top:244px;width:15px;height:422px;background:linear-gradient(90deg,#FFFFFF,#F0EEEA)"></div>
<div class="btn" style="left:1351px;top:675px;width:15px;height:15px"></div>
<svg class="a" style="left:1354px;top:680px" width="9" height="5"><path d="M0 0H9L4.5 5Z" fill="#505050"/></svg>
<div class="sb" style="left:390px;top:689px;width:962px;height:15px;border:1px solid #B7B4B0"></div>
<div class="btn" style="left:390px;top:689px;width:15px;height:15px"></div>
<svg class="a" style="left:395px;top:692px" width="5" height="9"><path d="M5 0V9L0 4.5Z" fill="#505050"/></svg>
<div class="btn" style="left:404px;top:689px;width:678px;height:15px;background:linear-gradient(#FFFFFF,#F0EEEA)"></div>
<div class="btn" style="left:1337px;top:689px;width:15px;height:15px"></div>
<svg class="a" style="left:1342px;top:692px" width="5" height="9"><path d="M0 0V9L5 4.5Z" fill="#505050"/></svg>
<div class="a" style="left:1351px;top:689px;width:15px;height:15px;background:#EEEBE7;border:1px solid #B7B4B0"></div>
<div class="a" style="left:397px;top:100px;width:109px;height:358px;background:#EFECE8;box-shadow:0 0 6px 2px rgba(0,0,0,0.30)"></div>
<div class="a" style="left:397px;top:100px;width:109px;height:30px;background:#fff"></div>
<div class="t" style="left:405px;top:107px;color:#A49C9C;letter-spacing:0.071px;">Airflow/Hz R...</div>
<div class="a" style="left:486px;top:107px;width:19px;height:19px;background:#E3E3E3"></div>
<svg class="a" style="left:492px;top:113px" width="7" height="7"><path d="M1 1L6 6M6 1L1 6" stroke="#F4F4F4" stroke-width="1.3"/></svg>
<div class="a" style="left:397px;top:130px;width:109px;height:19px;background:#EEEBE7"></div>
<div class="a" style="left:397px;top:149px;width:109px;height:1px;background:#D9D5D0"></div>
<div class="t" style="left:407px;top:132px;letter-spacing:-0.333px;"><span class="u">E</span>dit</div>
<div class="t" style="left:441px;top:132px;letter-spacing:-0.667px;"><span class="u">V</span>iew</div>
<svg class="a" style="left:495px;top:137px" width="9" height="7"><path d="M0.8 0.8 L3.8 3.5 L0.8 6.2 M4.8 0.8 L7.8 3.5 L4.8 6.2" fill="none" stroke="#000" stroke-width="1.3"/></svg>
<div class="a" style="left:399px;top:156px;width:13px;height:296px;background:#9C9B98"></div>
<div class="a" style="left:487px;top:156px;width:13px;height:296px;background:#9C9B98"></div>
<div class="a" style="left:255.5px;top:298.5px;width:300px;height:14px;line-height:14px;text-align:center;color:#F2EEE8;font-size:10.4px;white-space:pre;transform:rotate(-90deg)">MAF Hz (Hz)</div>
<div class="a" style="left:343.5px;top:298.5px;width:300px;height:14px;line-height:14px;text-align:center;color:#F2EEE8;font-size:11.2px;white-space:pre;transform:rotate(-90deg)">units</div>
<div class="a" style="left:416px;top:156px;width:37px;height:296px;background:#C9C3BD;overflow:hidden"><div class="a mono" style="left:2px;top:1px;width:33px;height:13px;background:#1580E8;color:#000;text-align:center;line-height:13px;padding-top:1px">19</div><div class="a mono" style="left:2px;top:15px;width:33px;height:13px;background:#1680E8;color:#000;text-align:center;line-height:13px;padding-top:1px">25</div><div class="a mono" style="left:2px;top:29px;width:33px;height:13px;background:#1A7EE8;color:#000;text-align:center;line-height:13px;padding-top:1px">50</div><div class="a mono" style="left:2px;top:43px;width:33px;height:13px;background:#1A7CE8;color:#000;text-align:center;line-height:13px;padding-top:1px">75</div><div class="a mono" style="left:2px;top:57px;width:33px;height:13px;background:#1E70E8;color:#000;text-align:center;line-height:13px;padding-top:1px">101</div><div class="a mono" style="left:2px;top:71px;width:33px;height:13px;background:#206CE8;color:#000;text-align:center;line-height:13px;padding-top:1px">126</div><div class="a mono" style="left:2px;top:85px;width:33px;height:13px;background:#2268E8;color:#000;text-align:center;line-height:13px;padding-top:1px">151</div><div class="a mono" style="left:2px;top:99px;width:33px;height:13px;background:#2464E8;color:#000;text-align:center;line-height:13px;padding-top:1px">176</div><div class="a mono" style="left:2px;top:113px;width:33px;height:13px;background:#2660E8;color:#000;text-align:center;line-height:13px;padding-top:1px">201</div><div class="a mono" style="left:2px;top:127px;width:33px;height:13px;background:#285CE8;color:#000;text-align:center;line-height:13px;padding-top:1px">226</div><div class="a mono" style="left:2px;top:141px;width:33px;height:13px;background:#2C54E8;color:#000;text-align:center;line-height:13px;padding-top:1px">252</div><div class="a mono" style="left:2px;top:155px;width:33px;height:13px;background:#3050E8;color:#000;text-align:center;line-height:13px;padding-top:1px">277</div><div class="a mono" style="left:2px;top:169px;width:33px;height:13px;background:#3448E8;color:#000;text-align:center;line-height:13px;padding-top:1px">302</div><div class="a mono" style="left:2px;top:183px;width:33px;height:13px;background:#3C40E8;color:#000;text-align:center;line-height:13px;padding-top:1px">403</div><div class="a mono" style="left:2px;top:197px;width:33px;height:13px;background:#4838E8;color:#000;text-align:center;line-height:13px;padding-top:1px">503</div><div class="a mono" style="left:2px;top:211px;width:33px;height:13px;background:#5830E8;color:#000;text-align:center;line-height:13px;padding-top:1px">604</div><div class="a mono" style="left:2px;top:225px;width:33px;height:13px;background:#7020E0;color:#000;text-align:center;line-height:13px;padding-top:1px">805</div><div class="a mono" style="left:2px;top:239px;width:33px;height:13px;background:#8810D0;color:#000;text-align:center;line-height:13px;padding-top:1px">1006</div><div class="a mono" style="left:2px;top:253px;width:33px;height:13px;background:#A008C0;color:#000;text-align:center;line-height:13px;padding-top:1px">1208</div><div class="a mono" style="left:2px;top:267px;width:33px;height:13px;background:#C000B0;color:#000;text-align:center;line-height:13px;padding-top:1px">1409</div><div class="a mono" style="left:2px;top:281px;width:33px;height:13px;background:#E00090;color:#000;text-align:center;line-height:13px;padding-top:1px">1610</div><div class="a" style="left:0;top:0;width:37px;height:2px;background:#C9C3BD"></div></div>
<div class="a" style="left:457px;top:156px;width:30px;height:296px;background:#C9C3BD;overflow:hidden"><div class="a mono" style="left:2px;top:1px;width:26px;height:13px;background:#3A8CC8;color:#fff;text-align:center;line-height:13px;padding-top:1px">145</div><div class="a mono" style="left:2px;top:15px;width:26px;height:13px;background:#BEBA00;color:#000;text-align:center;line-height:13px;padding-top:1px">152</div><div class="a mono" style="left:2px;top:29px;width:26px;height:13px;background:#98E000;color:#000;text-align:center;line-height:13px;padding-top:1px">165</div><div class="a mono" style="left:2px;top:43px;width:26px;height:13px;background:#88EC10;color:#000;text-align:center;line-height:13px;padding-top:1px">175</div><div class="a mono" style="left:2px;top:57px;width:26px;height:13px;background:#70F020;color:#000;text-align:center;line-height:13px;padding-top:1px">182</div><div class="a mono" style="left:2px;top:71px;width:26px;height:13px;background:#60F028;color:#000;text-align:center;line-height:13px;padding-top:1px">187</div><div class="a mono" style="left:2px;top:85px;width:26px;height:13px;background:#50F030;color:#000;text-align:center;line-height:13px;padding-top:1px">191</div><div class="a mono" style="left:2px;top:99px;width:26px;height:13px;background:#48F040;color:#000;text-align:center;line-height:13px;padding-top:1px">195</div><div class="a mono" style="left:2px;top:113px;width:26px;height:13px;background:#40F048;color:#000;text-align:center;line-height:13px;padding-top:1px">198</div><div class="a mono" style="left:2px;top:127px;width:26px;height:13px;background:#38F050;color:#000;text-align:center;line-height:13px;padding-top:1px">200</div><div class="a mono" style="left:2px;top:141px;width:26px;height:13px;background:#30F058;color:#000;text-align:center;line-height:13px;padding-top:1px">203</div><div class="a mono" style="left:2px;top:155px;width:26px;height:13px;background:#28F060;color:#000;text-align:center;line-height:13px;padding-top:1px">206</div><div class="a mono" style="left:2px;top:169px;width:26px;height:13px;background:#20F070;color:#000;text-align:center;line-height:13px;padding-top:1px">208</div><div class="a mono" style="left:2px;top:183px;width:26px;height:13px;background:#18E890;color:#000;text-align:center;line-height:13px;padding-top:1px">217</div><div class="a mono" style="left:2px;top:197px;width:26px;height:13px;background:#10E0A0;color:#000;text-align:center;line-height:13px;padding-top:1px">222</div><div class="a mono" style="left:2px;top:211px;width:26px;height:13px;background:#10D8B0;color:#000;text-align:center;line-height:13px;padding-top:1px">226</div><div class="a mono" style="left:2px;top:225px;width:26px;height:13px;background:#08C8C0;color:#000;text-align:center;line-height:13px;padding-top:1px">233</div><div class="a mono" style="left:2px;top:239px;width:26px;height:13px;background:#00C0C0;color:#000;text-align:center;line-height:13px;padding-top:1px">236</div><div class="a mono" style="left:2px;top:253px;width:26px;height:13px;background:#00C0C0;color:#000;text-align:center;line-height:13px;padding-top:1px">237</div><div class="a mono" style="left:2px;top:267px;width:26px;height:13px;background:#00C4C0;color:#000;text-align:center;line-height:13px;padding-top:1px">235</div><div class="a mono" style="left:2px;top:281px;width:26px;height:13px;background:#00C8B8;color:#000;text-align:center;line-height:13px;padding-top:1px">232</div><div class="a" style="left:0;top:0;width:30px;height:2px;background:#C9C3BD"></div></div>
<div class="a" style="left:512px;top:100px;width:123px;height:358px;background:#EFECE8;box-shadow:0 0 6px 2px rgba(0,0,0,0.30)"></div>
<div class="a" style="left:512px;top:100px;width:123px;height:30px;background:#fff"></div>
<div class="t" style="left:520px;top:107px;color:#A49C9C;letter-spacing:-0.062px;">MAF Scaling (M...</div>
<div class="a" style="left:615px;top:107px;width:19px;height:19px;background:#E3E3E3"></div>
<svg class="a" style="left:621px;top:113px" width="7" height="7"><path d="M1 1L6 6M6 1L1 6" stroke="#F4F4F4" stroke-width="1.3"/></svg>
<div class="a" style="left:512px;top:130px;width:123px;height:19px;background:#EEEBE7"></div>
<div class="a" style="left:512px;top:149px;width:123px;height:1px;background:#D9D5D0"></div>
<div class="t" style="left:522px;top:132px;letter-spacing:-0.333px;"><span class="u">E</span>dit</div>
<div class="t" style="left:557px;top:132px;letter-spacing:-0.667px;"><span class="u">V</span>iew</div>
<div class="t" style="left:596px;top:132px;letter-spacing:0.333px;"><span class="u">H</span>elp</div>
<div class="a" style="left:514px;top:156px;width:13px;height:296px;background:#9C9B98"></div>
<div class="a" style="left:616px;top:156px;width:13px;height:296px;background:#9C9B98"></div>
<div class="a" style="left:370.5px;top:298.5px;width:300px;height:14px;line-height:14px;text-align:center;color:#F2EEE8;font-size:10.4px;white-space:pre;transform:rotate(-90deg)">MAF Hz (Hz)</div>
<div class="a" style="left:472.5px;top:298.5px;width:300px;height:14px;line-height:14px;text-align:center;color:#F2EEE8;font-size:10.55px;white-space:pre;transform:rotate(-90deg)">MAF Scaling + MAF Adder(g/s)</div>
<div class="a" style="left:531px;top:156px;width:37px;height:296px;background:#C9C3BD;overflow:hidden"><div class="a mono" style="left:2px;top:1px;width:33px;height:13px;background:#1580E8;color:#000;text-align:center;line-height:13px;padding-top:1px">19</div><div class="a mono" style="left:2px;top:15px;width:33px;height:13px;background:#1680E8;color:#000;text-align:center;line-height:13px;padding-top:1px">25</div><div class="a mono" style="left:2px;top:29px;width:33px;height:13px;background:#1A7EE8;color:#000;text-align:center;line-height:13px;padding-top:1px">50</div><div class="a mono" style="left:2px;top:43px;width:33px;height:13px;background:#1A7CE8;color:#000;text-align:center;line-height:13px;padding-top:1px">75</div><div class="a mono" style="left:2px;top:57px;width:33px;height:13px;background:#1E70E8;color:#000;text-align:center;line-height:13px;padding-top:1px">101</div><div class="a mono" style="left:2px;top:71px;width:33px;height:13px;background:#206CE8;color:#000;text-align:center;line-height:13px;padding-top:1px">126</div><div class="a mono" style="left:2px;top:85px;width:33px;height:13px;background:#2268E8;color:#000;text-align:center;line-height:13px;padding-top:1px">151</div><div class="a mono" style="left:2px;top:99px;width:33px;height:13px;background:#2464E8;color:#000;text-align:center;line-height:13px;padding-top:1px">176</div><div class="a mono" style="left:2px;top:113px;width:33px;height:13px;background:#2660E8;color:#000;text-align:center;line-height:13px;padding-top:1px">201</div><div class="a mono" style="left:2px;top:127px;width:33px;height:13px;background:#285CE8;color:#000;text-align:center;line-height:13px;padding-top:1px">226</div><div class="a mono" style="left:2px;top:141px;width:33px;height:13px;background:#2C54E8;color:#000;text-align:center;line-height:13px;padding-top:1px">252</div><div class="a mono" style="left:2px;top:155px;width:33px;height:13px;background:#3050E8;color:#000;text-align:center;line-height:13px;padding-top:1px">277</div><div class="a mono" style="left:2px;top:169px;width:33px;height:13px;background:#3448E8;color:#000;text-align:center;line-height:13px;padding-top:1px">302</div><div class="a mono" style="left:2px;top:183px;width:33px;height:13px;background:#3C40E8;color:#000;text-align:center;line-height:13px;padding-top:1px">403</div><div class="a mono" style="left:2px;top:197px;width:33px;height:13px;background:#4838E8;color:#000;text-align:center;line-height:13px;padding-top:1px">503</div><div class="a mono" style="left:2px;top:211px;width:33px;height:13px;background:#5830E8;color:#000;text-align:center;line-height:13px;padding-top:1px">604</div><div class="a mono" style="left:2px;top:225px;width:33px;height:13px;background:#7020E0;color:#000;text-align:center;line-height:13px;padding-top:1px">805</div><div class="a mono" style="left:2px;top:239px;width:33px;height:13px;background:#8810D0;color:#000;text-align:center;line-height:13px;padding-top:1px">1006</div><div class="a mono" style="left:2px;top:253px;width:33px;height:13px;background:#A008C0;color:#000;text-align:center;line-height:13px;padding-top:1px">1208</div><div class="a mono" style="left:2px;top:267px;width:33px;height:13px;background:#C000B0;color:#000;text-align:center;line-height:13px;padding-top:1px">1409</div><div class="a mono" style="left:2px;top:281px;width:33px;height:13px;background:#E00090;color:#000;text-align:center;line-height:13px;padding-top:1px">1610</div><div class="a" style="left:0;top:0;width:37px;height:2px;background:#C9C3BD"></div></div>
<div class="a" style="left:572px;top:156px;width:44px;height:296px;background:#C9C3BD;overflow:hidden"><div class="a mono" style="left:2px;top:1px;width:40px;height:13px;background:#3A8CC8;color:#fff;text-align:center;line-height:13px;padding-top:1px">357.4</div><div class="a mono" style="left:2px;top:15px;width:40px;height:13px;background:#60F020;color:#000;text-align:center;line-height:13px;padding-top:1px">366.1</div><div class="a mono" style="left:2px;top:29px;width:40px;height:13px;background:#40F040;color:#000;text-align:center;line-height:13px;padding-top:1px">382.4</div><div class="a mono" style="left:2px;top:43px;width:40px;height:13px;background:#30F050;color:#000;text-align:center;line-height:13px;padding-top:1px">395.0</div><div class="a mono" style="left:2px;top:57px;width:40px;height:13px;background:#20F060;color:#000;text-align:center;line-height:13px;padding-top:1px">403.8</div><div class="a mono" style="left:2px;top:71px;width:40px;height:13px;background:#18F070;color:#000;text-align:center;line-height:13px;padding-top:1px">410.0</div><div class="a mono" style="left:2px;top:85px;width:40px;height:13px;background:#10E880;color:#000;text-align:center;line-height:13px;padding-top:1px">415.0</div><div class="a mono" style="left:2px;top:99px;width:40px;height:13px;background:#10E090;color:#000;text-align:center;line-height:13px;padding-top:1px">420.1</div><div class="a mono" style="left:2px;top:113px;width:40px;height:13px;background:#10E098;color:#000;text-align:center;line-height:13px;padding-top:1px">423.8</div><div class="a mono" style="left:2px;top:127px;width:40px;height:13px;background:#10E0A0;color:#000;text-align:center;line-height:13px;padding-top:1px">426.3</div><div class="a mono" style="left:2px;top:141px;width:40px;height:13px;background:#10D8A8;color:#000;text-align:center;line-height:13px;padding-top:1px">430.1</div><div class="a mono" style="left:2px;top:155px;width:40px;height:13px;background:#10D8B0;color:#000;text-align:center;line-height:13px;padding-top:1px">433.9</div><div class="a mono" style="left:2px;top:169px;width:40px;height:13px;background:#10D0B0;color:#000;text-align:center;line-height:13px;padding-top:1px">436.4</div><div class="a mono" style="left:2px;top:183px;width:40px;height:13px;background:#08C8C0;color:#000;text-align:center;line-height:13px;padding-top:1px">447.6</div><div class="a mono" style="left:2px;top:197px;width:40px;height:13px;background:#00C0C0;color:#000;text-align:center;line-height:13px;padding-top:1px">453.9</div><div class="a mono" style="left:2px;top:211px;width:40px;height:13px;background:#00B8C8;color:#000;text-align:center;line-height:13px;padding-top:1px">458.9</div><div class="a mono" style="left:2px;top:225px;width:40px;height:13px;background:#00B0D0;color:#000;text-align:center;line-height:13px;padding-top:1px">467.7</div><div class="a mono" style="left:2px;top:239px;width:40px;height:13px;background:#00A8D8;color:#000;text-align:center;line-height:13px;padding-top:1px">471.5</div><div class="a mono" style="left:2px;top:253px;width:40px;height:13px;background:#00A8D8;color:#000;text-align:center;line-height:13px;padding-top:1px">472.7</div><div class="a mono" style="left:2px;top:267px;width:40px;height:13px;background:#00A8D0;color:#000;text-align:center;line-height:13px;padding-top:1px">470.2</div><div class="a mono" style="left:2px;top:281px;width:40px;height:13px;background:#00B0D0;color:#000;text-align:center;line-height:13px;padding-top:1px">466.5</div><div class="a" style="left:0;top:0;width:44px;height:2px;background:#C9C3BD"></div></div>
<div class="t" style="left:1004px;top:709px;letter-spacing:-0.125px;">2005 Mitsubishi TDM Lancer Evolution VIII</div>
<div class="t" style="left:1235px;top:709px;letter-spacing:-0.105px;">No Vehicle Interface</div>
<div class="a" style="left:1363px;top:718px;width:1px;height:1px;background:#B0ADA8"></div>
<div class="a" style="left:1360px;top:721px;width:1px;height:1px;background:#B0ADA8"></div>
<div class="a" style="left:1363px;top:721px;width:1px;height:1px;background:#B0ADA8"></div>
<div class="a" style="left:1357px;top:724px;width:1px;height:1px;background:#B0ADA8"></div>
<div class="a" style="left:1360px;top:724px;width:1px;height:1px;background:#B0ADA8"></div>
<div class="a" style="left:1363px;top:724px;width:1px;height:1px;background:#B0ADA8"></div>
<div class="a" style="left:0;top:728px;width:1366px;height:40px;background:#0B0A09"></div>
<svg class="a" style="left:0;top:728px" width="1366" height="40"><defs><linearGradient id="tbl" x1="0" y1="0" x2="1" y2="0"><stop offset="0" stop-color="#0A0A0A"/><stop offset="0.45" stop-color="#0A0E16"/><stop offset="1" stop-color="#0E1626"/></linearGradient></defs><path d="M690 40 Q790 28 885 0 H1366 V40 Z" fill="#1A1714"/><rect x="0" y="0" width="1366" height="1" fill="url(#tbl)"/></svg>
<div class="a" style="left:59px;top:728px;width:344px;height:40px;background:#333333"></div>
<div class="a" style="left:2px;top:737px;width:55px;height:22px;background:#EEEEEE;border:1px solid;border-color:#FFFFFF #6A6A6A #6A6A6A #FFFFFF"></div>
<svg class="a" style="left:4px;top:740px" width="18" height="16" viewBox="0 0 19 17"><defs><linearGradient id="sh" x1="0" y1="0" x2="0.3" y2="1"><stop offset="0" stop-color="#58F4F8"/><stop offset="0.6" stop-color="#38B8E8"/><stop offset="1" stop-color="#2A78C8"/></linearGradient></defs>
<path d="M9.5 1 C11 1 12 1.5 12.8 2 C14 1.8 15.5 2.8 16 4 C17.3 4.5 18 6 17.8 7.5 C18.5 8.5 18.3 10.5 17 11.5 C16.2 12.5 14.5 12.8 13.5 12.8 L12.5 15.8 H6.5 L5.5 12.8 C4.5 12.8 2.8 12.5 2 11.5 C0.7 10.5 0.5 8.5 1.2 7.5 C1 6 1.7 4.5 3 4 C3.5 2.8 5 1.8 6.2 2 C7 1.5 8 1 9.5 1 Z" fill="url(#sh)" stroke="#E08848" stroke-width="1.1"/>
<path d="M9.5 14.5 V2.5 M9.5 14.5 L5 3.5 M9.5 14.5 L14 3.5 M9.5 14.5 L2.5 7 M9.5 14.5 L16.5 7" stroke="#2E9AD8" stroke-width="0.6" opacity="0.7"/></svg>
<div class="t" style="left:23px;top:740px;font-weight:bold;letter-spacing:0.75px;">Start</div>
<svg class="a" style="left:68px;top:737px" width="22" height="22"><circle cx="11" cy="11" r="9" fill="none" stroke="#C8C8C8" stroke-width="3.2" opacity="0.5"/><circle cx="11" cy="11" r="9" fill="none" stroke="#fff" stroke-width="2"/></svg>
<div class="t" style="left:99px;top:739px;font-size:14.4px;line-height:18px;color:#B4B4B4">Type here to search</div>
<svg class="a" style="left:376px;top:740px" width="13" height="17"><rect x="3.5" y="0.5" width="6" height="11" rx="1" fill="none" stroke="#C8C8C8"/><path d="M1 8 Q1 13.5 6.5 13.5 Q12 13.5 12 8 M6.5 13.5V16 M3.5 16.5H9.5" fill="none" stroke="#C8C8C8"/></svg>
<svg class="a" style="left:416px;top:740px" width="22" height="17"><rect x="5.5" y="1.5" width="11" height="14" fill="none" stroke="#fff" stroke-width="1.4"/><path d="M3 3.5H1.2V13.5H3 M19 3.5H20.8V13.5H19" fill="none" stroke="#fff" stroke-width="1.4"/></svg>
<svg class="a" style="left:467px;top:737px" width="24" height="23" viewBox="0 0 24 23"><path d="M2 11 C2 4 7 1 12 1 C18 1 22 5 22 12 V13.5 H8 C8 17 11 19 14.5 19 C17 19 19 18.5 21 17.5 V21 C19 22 16.5 22.5 14 22.5 C8 22.5 3.5 19 3.5 13.5 C3.5 10 5.5 7.5 8.5 6.5 C7 8 6.5 9 6.5 10 H16.5 C16.5 6.5 14.5 5 12 5 C8 5 4.5 7.5 2 11 Z" fill="#0C78D8"/></svg>
<div class="a" style="left:458px;top:766px;width:40px;height:2px;background:#76B9ED"></div>
<svg class="a" style="left:516px;top:739px" width="22" height="19"><path d="M0.5 1.5 Q0.5 0.5 1.5 0.5 H7.5 L9 2 H20.5 Q21.5 2 21.5 3 V17 H0.5 Z" fill="#E8C468"/><rect x="0.5" y="3.2" width="21" height="14" rx="0.5" fill="#FADF97"/><rect x="2" y="1.2" width="5" height="1.3" fill="#F6F6F6"/><path d="M3.8 18.5 V10 H18 V18.5 H14.5 V14 H7.5 V18.5 Z" fill="#3AAEEA"/></svg>
<div class="a" style="left:552px;top:728px;width:48px;height:40px;background:linear-gradient(160deg,#3A3A3A,#333333 55%,#2E2E2E)"></div>
<div class="a" style="left:552px;top:766px;width:48px;height:2px;background:#76B9ED"></div>
<svg class="a" style="left:560px;top:738px" width="31" height="21" viewBox="0 0 24 16"><defs><radialGradient id="tbg" cx="0.55" cy="0.45" r="0.6"><stop offset="0" stop-color="#10E0EC"/><stop offset="1" stop-color="#7AD0DC"/></radialGradient></defs>
<path d="M4 7 L10.5 12.2 L21 5.8 V7.5 L10.5 14 L4 8.8 Z" fill="#8A8A8A"/>
<path d="M9.60 12.30 l1 2.4 l0.9 -0.5 l-1 -2.4 Z" fill="#E0E0E0"/><path d="M11.70 11.05 l1 2.4 l0.9 -0.5 l-1 -2.4 Z" fill="#E0E0E0"/><path d="M13.80 9.80 l1 2.4 l0.9 -0.5 l-1 -2.4 Z" fill="#E0E0E0"/><path d="M15.90 8.55 l1 2.4 l0.9 -0.5 l-1 -2.4 Z" fill="#E0E0E0"/><path d="M18.00 7.30 l1 2.4 l0.9 -0.5 l-1 -2.4 Z" fill="#E0E0E0"/>
<path d="M4 7 L15 0.5 L21 5.8 L10.5 12.2 Z" fill="#C8C8C8"/>
<path d="M6.5 6.8 L15 1.8 L19 5.6 L10.5 10.6 Z" fill="url(#tbg)"/>
</svg>
<svg class="a" style="left:612px;top:735px" width="26" height="25" viewBox="0 0 26 25"><defs><linearGradient id="xg" x1="0" y1="0" x2="1" y2="1"><stop offset="0" stop-color="#FFFFFF"/><stop offset="1" stop-color="#C8D8C4"/></linearGradient></defs>
<path d="M1.5 4 Q1.5 1.5 4 1.5 H21 V19 H1.5 Z" fill="url(#xg)" stroke="#62BC4C" stroke-width="1.3"/>
<path d="M6 7 L23.5 8.5 L22.5 23 L5 21.5 Z" fill="#F2F6EE" stroke="#C0D4B8" stroke-width="0.8"/>
<path d="M18.4 10.7 h4.3 l-0.2 3 h-4.3 Z" fill="#3C9C4A"/><path d="M7.7 14.0 h4.3 l-0.2 3 h-4.3 Z" fill="#3C9C4A"/><path d="M12.9 14.3 h4.3 l-0.2 3 h-4.3 Z" fill="#3C9C4A"/><path d="M18.1 14.7 h4.3 l-0.2 3 h-4.3 Z" fill="#3C9C4A"/><path d="M7.4 18.0 h4.3 l-0.2 3 h-4.3 Z" fill="#3C9C4A"/><path d="M12.6 18.4 h4.3 l-0.2 3 h-4.3 Z" fill="#3C9C4A"/><path d="M17.8 18.7 h4.3 l-0.2 3 h-4.3 Z" fill="#3C9C4A"/>
<path d="M7.5 6.5 L14.5 14 M14 6.5 L7.5 14" stroke="#217A32" stroke-width="2.6"/>
</svg>
<div class="a" style="left:605px;top:766px;width:40px;height:2px;background:#76B9ED"></div>
<svg class="a" style="left:661px;top:735px" width="26" height="26" viewBox="0 0 26 26"><defs><linearGradient id="pg" x1="0" y1="0" x2="0" y2="1"><stop offset="0" stop-color="#E8F4FC"/><stop offset="1" stop-color="#A8D0EC"/></linearGradient></defs>
<path d="M12 7 C5 7 1 11 1 15.5 C1 19.5 4 21.5 7.5 21 C9.5 20.7 10 19 12 19.2 C14 19.4 14.5 21.5 17.5 20.8 C21 20 22.5 16.5 21.5 13 C20.5 9 17 7 12 7 Z" fill="url(#pg)" stroke="#7AAED0" stroke-width="0.8"/>
<circle cx="5.5" cy="14.5" r="2" fill="#E83838"/><circle cx="9.5" cy="10.5" r="1.9" fill="#68C040"/><circle cx="14.5" cy="9.8" r="1.9" fill="#F0B020"/><circle cx="10" cy="16.5" r="1.4" fill="#1E2A38"/>
<path d="M11.5 25 L21 8.5" stroke="#E0862A" stroke-width="2.4" stroke-linecap="round"/>
<path d="M20 8 L23 2 Q25 0.5 25.5 2.5 L22.5 9.5 Z" fill="#D8B080"/></svg>
<div class="a" style="left:654px;top:766px;width:40px;height:2px;background:#76B9ED"></div>
<svg class="a" style="left:1158px;top:743px" width="14" height="9"><path d="M1 8 L7 2 L13 8" fill="none" stroke="#fff" stroke-width="1.2"/></svg>
<svg class="a" style="left:1180px;top:741px" width="18" height="13"><path d="M3 1v3M6 1v3M2 4h5v2.5q0 2-2.5 2q-2.5 0-2.5-2z M4.5 8.5V12" fill="none" stroke="#fff" stroke-width="1"/><rect x="7.5" y="3.5" width="9" height="7" fill="none" stroke="#fff"/><rect x="9" y="5" width="6" height="4" fill="#fff"/><rect x="16.5" y="5.5" width="1.2" height="3" fill="#fff"/></svg>
<svg class="a" style="left:1206px;top:741px" width="16" height="15"><path d="M1.8 14 A12 12 0 0 1 13.8 2 M4.9 14 A8.9 8.9 0 0 1 13.8 5.1 M8 14 A5.8 5.8 0 0 1 13.8 8.2" fill="none" stroke="#F0F0F0" stroke-width="1.3"/><circle cx="12.6" cy="12.8" r="1.5" fill="#fff"/></svg>
<svg class="a" style="left:1227px;top:740px" width="19" height="16"><path d="M1 5.5H4L8.5 1.5V14.5L4 10.5H1Z" fill="none" stroke="#fff" stroke-width="1"/><path d="M11 5 Q12.5 8 11 11 M13.5 3 Q16 8 13.5 13 M16 1 Q19.5 8 16 15" fill="none" stroke="#C8C8C8" stroke-width="1"/></svg>
<div class="t" style="left:1259px;top:731px;color:#fff;letter-spacing:0.167px;">9:37 AM</div>
<div class="t" style="left:1256px;top:749px;color:#fff;letter-spacing:-0.125px;">10/6/2017</div>
<svg class="a" style="left:1324px;top:739px" width="24" height="26"><path d="M1.5 1.5H20V15H8L5 18.5V15H1.5Z" fill="#fff"/><path d="M5 5H16M5 8H16M5 11H12" stroke="#222" stroke-width="1"/><circle cx="16" cy="18" r="7" fill="#1E1E1E" stroke="#808080" stroke-width="1.2"/><path d="M15 14.5 L17 13.5 V22" stroke="#fff" stroke-width="1.5" fill="none"/></svg>
<div class="a" style="left:1361px;top:728px;width:1px;height:40px;background:#606060"></div>
</body></html>
